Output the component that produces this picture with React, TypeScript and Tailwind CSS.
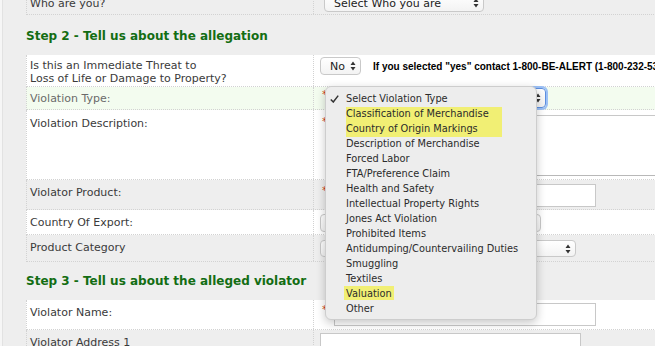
import React from "react";

const Arrows = () => (
  <svg width="6" height="10" viewBox="0 0 6 10" className="shrink-0">
    <path d="M0.5 4 L3 0.5 L5.5 4Z M0.5 6 L3 9.5 L5.5 6Z" fill="#333" />
  </svg>
);

function Sel({
  w,
  h,
  text,
  focus,
}: {
  w: number;
  h: number;
  text?: string;
  focus?: boolean;
}) {
  return (
    <div
      style={{ width: w, height: h }}
      className={
        "shrink-0 flex items-center justify-between rounded-[4px] border bg-gradient-to-b from-white to-[#f3f3f3] pl-[9px] pr-[4px] font-['DejaVu_Sans',sans-serif] text-[11px] text-[#222] " +
        (focus
          ? "border-[#5d8fe0] shadow-[0_0_0_2px_#9cc0f5]"
          : "border-[#c9c9c9]")
      }
    >
      <span className="whitespace-nowrap leading-none">{text}</span>
      <Arrows />
    </div>
  );
}

function Input({ w, h }: { w: number; h: number }) {
  return (
    <div
      style={{ width: w, height: h }}
      className="shrink-0 border border-[#c8c8c8] bg-white"
    />
  );
}

const Star = () => (
  <span className="w-[12px] shrink-0 text-[10px] leading-none text-[#d2400f] mt-[2px] font-['DejaVu_Sans',sans-serif]">
    *
  </span>
);

function Row({
  h,
  bg,
  label,
  labelPt,
  labelColor = "text-[#3a3a3a]",
  fieldClass,
  children,
}: {
  h: number;
  bg: string;
  label: React.ReactNode;
  labelPt: string;
  labelColor?: string;
  fieldClass: string;
  children?: React.ReactNode;
}) {
  return (
    <div
      style={{ height: h }}
      className={
        "grid grid-cols-[287px_1fr] border-l border-b border-dotted border-[#d2d2d2] " +
        bg
      }
    >
      <div
        className={
          "border-r border-dotted border-[#d2d2d2] pl-[3px] text-[11px] leading-[13px] font-['DejaVu_Sans',sans-serif] " +
          labelPt +
          " " +
          labelColor
        }
      >
        {label}
      </div>
      <div className={"flex items-start " + fieldClass}>{children}</div>
    </div>
  );
}

const items = [
  "Select Violation Type",
  "Classification of Merchandise",
  "Country of Origin Markings",
  "Description of Merchandise",
  "Forced Labor",
  "FTA/Preference Claim",
  "Health and Safety",
  "Intellectual Property Rights",
  "Jones Act Violation",
  "Prohibited Items",
  "Antidumping/Countervailing Duties",
  "Smuggling",
  "Textiles",
  "Valuation",
  "Other",
];

export default function App() {
  return (
    <div className="relative w-[655px] h-[346px] overflow-hidden bg-[#eeeeee] flex">
      <div className="w-[3px] shrink-0 bg-[#f6f6f6] border-r border-[#e2e2e2]" />
      <div className="ml-[23px] w-[700px] shrink-0 mt-[-16px]">
        <Row
          h={31}
          bg="bg-[#eeeeee]"
          label="Who are you?"
          labelPt="pt-[13px]"
          fieldClass="pl-[10px] pt-[10px]"
        >
          <Sel w={160} h={18} text="Select Who you are" />
        </Row>

        <div className="h-[40px] flex items-center font-['DejaVu_Sans',sans-serif] font-bold text-[12px] text-[#136d13] pt-[1px]">
          Step 2 - Tell us about the allegation
        </div>

        <Row
          h={32}
          bg="bg-white"
          label={
            <>
              Is this an Immediate Threat to
              <br />
              Loss of Life or Damage to Property?
            </>
          }
          labelPt="pt-[4px]"
          fieldClass="pl-[6px] pt-[2px] items-center"
        >
          <div className="flex items-center">
            <Sel w={41} h={18} text="No" />
            <span className="ml-[12px] whitespace-nowrap font-['Liberation_Sans',sans-serif] font-bold text-[10px] text-black">
              If you selected "yes" contact 1-800-BE-ALERT (1-800-232-5368)
            </span>
          </div>
        </Row>

        <Row
          h={23}
          bg="bg-[#f3fcef]"
          label="Violation Type:"
          labelPt="pt-[5px]"
          labelColor="text-[#6a6a6a]"
          fieldClass="pl-[8px] pt-[1px]"
        >
          <Star />
          <Sel w={212} h={20} focus />
        </Row>

        <Row
          h={70}
          bg="bg-white"
          label="Violation Description:"
          labelPt="pt-[7px]"
          fieldClass="pl-[8px] pt-[5px]"
        >
          <Star />
          <div className="h-[61px] w-[400px] shrink-0 border border-[#c8c8c8] border-b-[#b8b8b8] bg-white" />
        </Row>

        <Row
          h={30}
          bg="bg-[#eeeeee]"
          label="Violator Product:"
          labelPt="pt-[6px]"
          fieldClass="pl-[8px] pt-[4px]"
        >
          <Star />
          <Input w={262} h={23} />
        </Row>

        <Row
          h={25}
          bg="bg-white"
          label="Country Of Export:"
          labelPt="pt-[6px]"
          fieldClass="pl-[6px] pt-[4px]"
        >
          <Sel w={221} h={18} text="" />
        </Row>

        <Row
          h={27}
          bg="bg-[#eeeeee]"
          label="Product Category"
          labelPt="pt-[6px]"
          fieldClass="pl-[6px] pt-[5px]"
        >
          <Sel w={256} h={17} text="" />
        </Row>

        <div className="h-[38px] flex items-center font-['DejaVu_Sans',sans-serif] font-bold text-[12px] text-[#136d13]">
          Step 3 - Tell us about the alleged violator
        </div>

        <Row
          h={30}
          bg="bg-white"
          label="Violator Name:"
          labelPt="pt-[6px]"
          fieldClass="pl-[8px] pt-[3px]"
        >
          <Star />
          <Input w={262} h={23} />
        </Row>

        <Row
          h={30}
          bg="bg-[#eeeeee]"
          label="Violator Address 1"
          labelPt="pt-[6px]"
          fieldClass="pl-[6px] pt-[3px]"
        >
          <Input w={261} h={23} />
        </Row>
      </div>

      <div className="absolute left-[325px] top-[86px] w-[212px] h-[234px] rounded-[6px] border border-[#cdcdcd] bg-[#ededed] shadow-[0_3px_10px_rgba(0,0,0,0.22)] pt-[4px] font-['DejaVu_Sans',sans-serif] text-[9.8px] text-[#2b2b2b]">
        <div className="absolute left-[20px] top-[20px] w-[156px] h-[30px] bg-[#f1ef74]" />
        <div className="absolute left-[18px] top-[199px] w-[50px] h-[14px] bg-[#f1ef74]" />
        {items.map((t, i) => (
          <div
            key={t}
            className="relative h-[15px] leading-[15px] pl-[20px] whitespace-nowrap"
          >
            {i === 0 && (
              <svg
                width="9"
                height="8"
                viewBox="0 0 9 8"
                className="absolute left-[4px] top-[4px]"
              >
                <path
                  d="M0.8 4.4 L3.3 7 L8.2 0.6"
                  fill="none"
                  stroke="#333"
                  strokeWidth="1.5"
                />
              </svg>
            )}
            {t}
          </div>
        ))}
      </div>
    </div>
  );
}
